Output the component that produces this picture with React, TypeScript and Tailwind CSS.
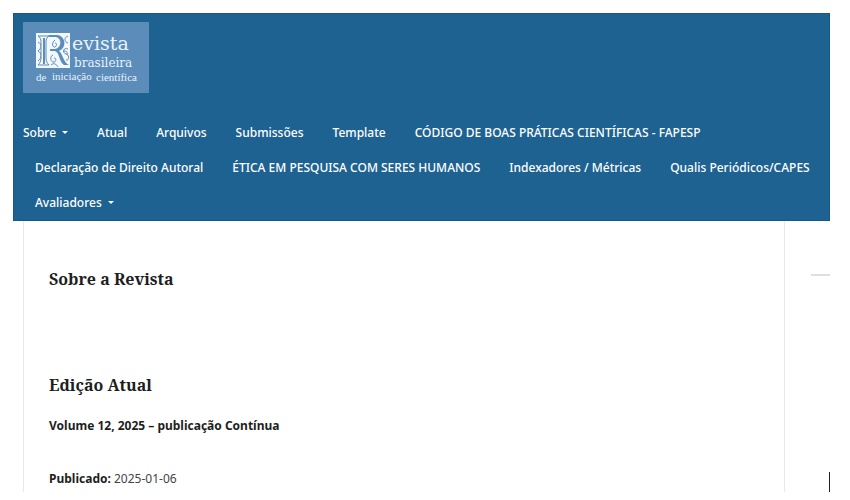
import React from "react";

type NavItem = { label: string; hasMenu?: boolean };

const navItems: NavItem[] = [
  { label: "Sobre", hasMenu: true },
  { label: "Atual" },
  { label: "Arquivos" },
  { label: "Submissões" },
  { label: "Template" },
  { label: "CÓDIGO DE BOAS PRÁTICAS CIENTÍFICAS - FAPESP" },
  { label: "Declaração de Direito Autoral" },
  { label: "ÉTICA EM PESQUISA COM SERES HUMANOS" },
  { label: "Indexadores / Métricas" },
  { label: "Qualis Periódicos/CAPES" },
  { label: "Avaliadores", hasMenu: true },
];

function Logo() {
  return (
    <svg
      role="img"
      aria-label="Revista brasileira de iniciação científica"
      viewBox="0 0 126 71"
      className="block h-[71px] w-[126px]"
      fontFamily="'Liberation Serif', serif"
      fill="#e9f2fa"
    >
      <rect width="126" height="71" fill="#5b8cba" />
      <rect x="13" y="11" width="34" height="35" fill="#f3f8fc" />
      <g fill="none" stroke="#5b8cba" strokeWidth="1">
        <path d="M15 20c4 2 4 6 0 9c4 2 4 7 0 10M45 14c-4 1-4 6 0 7M45 27c-5-2-6 4-2 5s3 7 0 6" />
        <path d="M32 18c-3 2-3 6-1 7s4-4 1-4M30 33c-3 1-3 6 0 7s4-4 1-4M28 43c3-3 6 0 7 2M41 29c3 0 4 2 3 4" />
        <path d="M15 14h11c-2 1-3 3-3 6v16c0 3 1 5 3 7H15c2-2 3-4 3-7V20c0-3-1-5-3-6z" fill="#f3f8fc" />
      </g>
      <path d="M20 16h2v26h-2zM26 13h8c9 1 10 13 2 16 4 3 4 11 10 14h-5c-5-3-4-12-9-14h-5v-2h5c7-1 7-11 1-12h-7z" fill="#5b8cba" />
      <text x="49" y="28" fontSize="19" fontFamily="'DejaVu Serif', serif">evista</text>
      <text x="51" y="45" fontSize="12" fontFamily="'DejaVu Serif', serif">brasileira</text>
      <text x="13" y="59" fontSize="11">de</text>
      <text x="29" y="58" fontSize="11">iniciação</text>
      <text x="73" y="59" fontSize="11">científica</text>
    </svg>
  );
}

function Caret() {
  return (
    <svg viewBox="0 0 6 3" aria-hidden="true" className="h-[3px] w-1.5 fill-current">
      <path d="M0 0h6L3 3z" />
    </svg>
  );
}

export default function App() {
  return (
    <div className="flex min-h-screen flex-col bg-white pt-[13px] pr-5 pb-2 pl-[13px] font-['Noto_Sans',sans-serif] text-[#1e1e1e]">
      <header className="border border-[#185787] bg-[#1e6292] px-[9px] pt-2 pb-0">
        <a href="#inicio" className="inline-block align-top">
          <Logo />
        </a>
        <nav aria-label="Navegação principal" className="-mr-2 pt-[22px]">
          <ul className="flex flex-wrap gap-x-[29px] pl-3 text-[12px] leading-[35px] font-medium text-white">
            {navItems.map(({ label, hasMenu }) => (
              <li key={label} className="first:-ml-3">
                <a href="#menu" className="flex items-center gap-1.5 whitespace-nowrap">
                  {label}
                  {hasMenu && <Caret />}
                </a>
              </li>
            ))}
          </ul>
        </nav>
      </header>
      <div className="flex flex-1">
        <main className="ml-2.5 flex-1 border-x border-x-[#e8e8e8] px-[25px] pt-[45px]">
          <section className="pb-20">
            <h2 className="font-['Noto_Serif','DejaVu_Serif_Condensed','DejaVu_Serif',serif] text-base leading-[26px] font-bold">
              Sobre a Revista
            </h2>
          </section>
          <section>
            <h2 className="font-['Noto_Serif','DejaVu_Serif_Condensed','DejaVu_Serif',serif] text-base leading-[26px] font-bold">
              Edição Atual
            </h2>
            <h3 className="mt-[18px] text-[12px] leading-5 font-bold">
              Volume 12, 2025 – publicação Contínua
            </h3>
            <p className="mt-[33px] text-[12px] leading-5 text-[#444444]">
              <strong className="text-[#1e1e1e]">Publicado:</strong> 2025-01-06
            </p>
          </section>
        </main>
        <aside aria-label="Barra lateral" className="flex w-[45px] flex-col items-end justify-between pt-[53px]">
          <div className="h-0.5 w-[19px] bg-[#dedede]" />
          <div className="h-5 w-px bg-[#222222]" />
        </aside>
      </div>
    </div>
  );
}
